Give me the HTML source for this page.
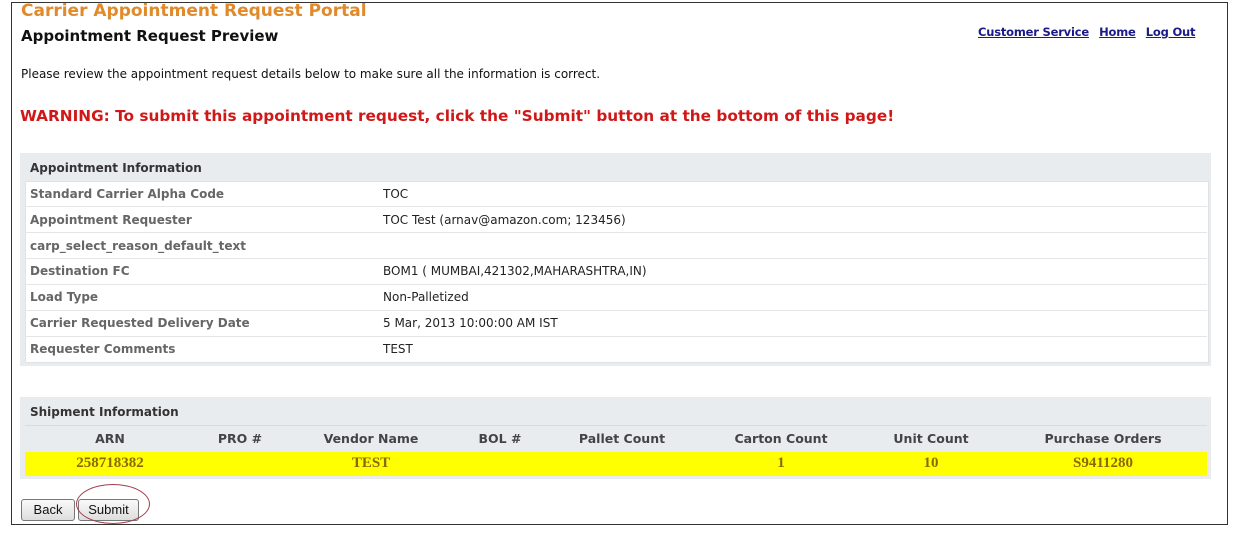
<!DOCTYPE html>
<html><head><style>
body{margin:0;width:1233px;height:533px;background:#fff;font-family:"DejaVu Sans","Liberation Sans",sans-serif;position:relative;overflow:hidden}
.a{position:absolute;white-space:nowrap}
.frame{position:absolute;left:11px;top:2px;width:1215px;height:521px;border:1px solid #333}
.box{position:absolute;left:20px;width:1191px;background:#e9ecef}
.lbl{font-size:12px;color:#666;font-weight:bold;left:30px}
.val{font-size:12px;color:#222;left:383px}
.line{position:absolute;left:25px;width:1182px;height:1px;background:#e4e6e8}
.th{font-size:12.5px;font-weight:bold;color:#444;transform:translateX(-50%)}
.td{font-weight:bold;color:#8a6a00;transform:translateX(-50%);font-family:"Liberation Serif",serif;font-size:15px}
.btn{position:absolute;top:499px;height:20px;border:1px solid #777;border-radius:3px;background:linear-gradient(#fafafa,#ddd);font-family:"Liberation Sans",sans-serif;font-size:13px;text-align:center;line-height:20px;color:#111}
a{color:#1a1a8a;font-weight:bold;font-size:11.5px;text-decoration:underline;letter-spacing:-0.2px}
</style></head><body>
<div class="frame"></div>
<div class="a" style="left:21px;top:1px;font-size:17px;font-weight:bold;color:#e08a2c">Carrier Appointment Request Portal</div>
<div class="a" style="left:21px;top:27px;font-size:15px;font-weight:bold;color:#111">Appointment Request Preview</div>
<div class="a" style="left:978px;top:21px"><a>Customer Service</a>&nbsp; <a>Home</a>&nbsp; <a>Log Out</a></div>
<div class="a" style="left:21px;top:67px;font-size:12px;color:#111">Please review the appointment request details below to make sure all the information is correct.</div>
<div class="a" style="left:20px;top:107px;font-size:15.3px;font-weight:bold;color:#d01818">WARNING: To submit this appointment request, click the "Submit" button at the bottom of this page!</div>

<div class="box" style="top:153px;height:213px"></div>
<div style="position:absolute;left:25px;top:181px;width:1182px;height:180px;background:#fff;border:1px solid #e0e3e6"></div>
<div class="a lbl" style="top:161px;color:#333">Appointment Information</div>
<div class="line" style="top:206px"></div><div class="line" style="top:232px"></div><div class="line" style="top:258px"></div><div class="line" style="top:284px"></div><div class="line" style="top:310px"></div><div class="line" style="top:336px"></div>
<div class="a lbl" style="top:187px">Standard Carrier Alpha Code</div><div class="a val" style="top:187px">TOC</div>
<div class="a lbl" style="top:213px">Appointment Requester</div><div class="a val" style="top:213px">TOC Test (arnav@amazon.com; 123456)</div>
<div class="a lbl" style="top:239px">carp_select_reason_default_text</div>
<div class="a lbl" style="top:264px">Destination FC</div><div class="a val" style="top:264px">BOM1 ( MUMBAI,421302,MAHARASHTRA,IN)</div>
<div class="a lbl" style="top:290px">Load Type</div><div class="a val" style="top:290px">Non-Palletized</div>
<div class="a lbl" style="top:316px">Carrier Requested Delivery Date</div><div class="a val" style="top:316px">5 Mar, 2013 10:00:00 AM IST</div>
<div class="a lbl" style="top:342px">Requester Comments</div><div class="a val" style="top:342px">TEST</div>

<div class="box" style="top:397px;height:82px"></div>
<div class="line" style="top:425px;background:#d8dbde"></div>
<div class="a lbl" style="top:405px;color:#333">Shipment Information</div>
<div class="a th" style="left:110px;top:431px">ARN</div>
<div class="a th" style="left:240px;top:431px">PRO #</div>
<div class="a th" style="left:371px;top:431px">Vendor Name</div>
<div class="a th" style="left:500px;top:431px">BOL #</div>
<div class="a th" style="left:622px;top:431px">Pallet Count</div>
<div class="a th" style="left:781px;top:431px">Carton Count</div>
<div class="a th" style="left:931px;top:431px">Unit Count</div>
<div class="a th" style="left:1103px;top:431px">Purchase Orders</div>
<div style="position:absolute;left:25px;top:452px;width:1182px;height:24px;background:#ffff00"></div>
<div class="a td" style="left:110px;top:455px">258718382</div>
<div class="a td" style="left:371px;top:455px">TEST</div>
<div class="a td" style="left:781px;top:455px">1</div>
<div class="a td" style="left:931px;top:455px">10</div>
<div class="a td" style="left:1103px;top:455px">S9411280</div>

<div class="btn" style="left:21px;width:52px">Back</div>
<div class="btn" style="left:78px;width:59px">Submit</div>
<div style="position:absolute;left:76px;top:484px;width:72px;height:38px;border:1px solid #a04050;border-radius:50%"></div>
</body></html>
